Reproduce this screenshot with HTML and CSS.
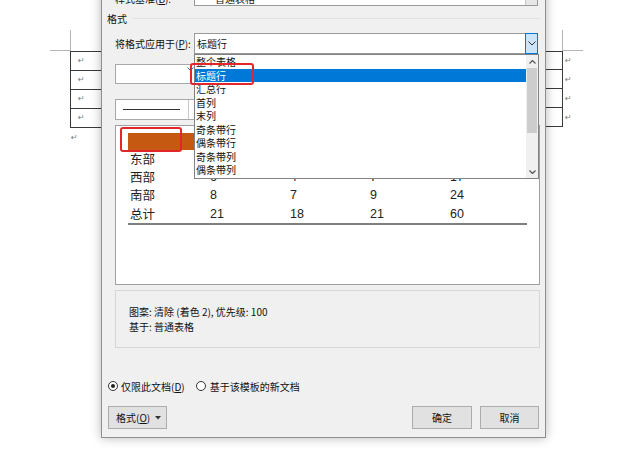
FILE: index.html
```html
<!DOCTYPE html>
<html lang="zh-CN">
<head>
<meta charset="utf-8">
<title>修改样式</title>
<link rel="stylesheet" href="styles.css">
</head>
<body>
<div class="page">
  <div class="crop crop-l-v"></div>
  <div class="crop crop-l-h"></div>
  <div class="crop crop-r-v"></div>
  <div class="crop crop-r-h"></div>

  <div class="doc doc-left">
    <div class="drow"><span class="pm">↵</span></div>
    <div class="drow"><span class="pm">↵</span></div>
    <div class="drow"><span class="pm">↵</span></div>
    <div class="drow"><span class="pm">↵</span></div>
    <div class="pm pm-after">↵</div>
  </div>

  <div class="doc doc-right">
    <div class="rrow"><div class="dcell"></div><span class="pm">↵</span></div>
    <div class="rrow"><div class="dcell"></div><span class="pm">↵</span></div>
    <div class="rrow"><div class="dcell"></div><span class="pm">↵</span></div>
    <div class="rrow"><div class="dcell"></div><span class="pm">↵</span></div>
  </div>

  <div class="dialog">
    <div class="row row-based">
      <label class="lbl">样式基准(<u>B</u>):</label>
      <div class="combo combo-top">
        <span class="combo-text text-indent">普通表格</span>
        <span class="combo-btn btn-gray"></span>
      </div>
    </div>

    <div class="group-head"><span>格式</span><i class="group-line"></i></div>

    <div class="row row-apply">
      <label class="lbl">将格式应用于(<u>P</u>):</label>
      <div class="combo combo-apply">
        <span class="combo-text">标题行</span>
        <span class="combo-btn btn-open">
          <svg width="8" height="5" viewBox="0 0 8 5"><polyline points="0.5,0.5 4,4 7.5,0.5" fill="none" stroke="#333" stroke-width="1"/></svg>
        </span>
      </div>
    </div>

    <div class="row row-font">
      <div class="field field-font">
        <svg class="blue-chev" width="7" height="5" viewBox="0 0 7 5"><polyline points="0.5,0.5 3.5,3.5 6.5,0.5" fill="none" stroke="#0078d7" stroke-width="1"/></svg>
        <i class="blue-bar"></i>
      </div>
    </div>

    <div class="row row-line">
      <div class="field field-line">
        <i class="sample-line"></i>
        <i class="divider"></i>
      </div>
    </div>

    <div class="preview">
      <div class="ptable">
        <div class="phead"></div>
        <div class="prow"><span class="pl">东部</span><span>7</span><span>7</span><span>5</span><span>19</span></div>
        <div class="prow"><span class="pl">西部</span><span>6</span><span>4</span><span>7</span><span>17</span></div>
        <div class="prow"><span class="pl">南部</span><span>8</span><span>7</span><span>9</span><span>24</span></div>
        <div class="prow"><span class="pl">总计</span><span>21</span><span>18</span><span>21</span><span>60</span></div>
      </div>
    </div>

    <div class="desc">
      <p>图案: 清除 (着色 2), 优先级: 100</p>
      <p>基于: 普通表格</p>
    </div>

    <div class="radios">
      <span class="radio on"></span><span class="rlabel">仅限此文档(<u>D</u>)</span>
      <span class="radio second"></span><span class="rlabel">基于该模板的新文档</span>
    </div>

    <div class="buttons">
      <button class="btn btn-fmt">格式(<u>O</u>)<svg width="6" height="4" viewBox="0 0 6 4"><polygon points="0,0 6,0 3,3.5" fill="#333"/></svg></button>
      <span class="spacer"></span>
      <button class="btn btn-ok">确定</button>
      <button class="btn btn-cancel">取消</button>
    </div>

    <div class="dropdown">
      <ul class="items">
        <li>整个表格</li>
        <li class="sel">标题行</li>
        <li>汇总行</li>
        <li>首列</li>
        <li>末列</li>
        <li>奇条带行</li>
        <li>偶条带行</li>
        <li>奇条带列</li>
        <li>偶条带列</li>
      </ul>
      <div class="scroll">
        <span class="arrow"><svg width="7" height="4" viewBox="0 0 7 4"><polyline points="0.5,3.5 3.5,0.5 6.5,3.5" fill="none" stroke="#555" stroke-width="1.2"/></svg></span>
        <span class="thumb"></span>
        <span class="track"></span>
        <span class="arrow"><svg width="7" height="4" viewBox="0 0 7 4"><polyline points="0.5,0.5 3.5,3.5 6.5,0.5" fill="none" stroke="#555" stroke-width="1.2"/></svg></span>
      </div>
    </div>
  </div>

  <div class="mark mark-1"></div>
  <div class="mark mark-2"></div>
</div>
</body>
</html>
```

FILE: styles.css
```css
* { box-sizing: border-box; }
body { margin: 0; }
.page {
  position: relative;
  width: 640px;
  height: 464px;
  overflow: hidden;
  background: #fff;
  font-family: "Noto Sans CJK SC", "Liberation Sans", sans-serif;
}

/* background document */
.crop { position: absolute; background: #b4b4b4; }
.crop-l-v { left: 70px; top: 30px; width: 1px; height: 21px; }
.crop-l-h { left: 50px; top: 50px; width: 20px; height: 1px; }
.crop-r-v { left: 562px; top: 30px; width: 1px; height: 21px; }
.crop-r-h { left: 562px; top: 50px; width: 21px; height: 1px; }

.doc { position: absolute; top: 51px; }
.doc-left { left: 70px; width: 60px; border-top: 1px solid #3a3a3a; }
.drow {
  height: 19px;
  border-left: 1px solid #3a3a3a;
  border-bottom: 1px solid #3a3a3a;
  display: flex;
  align-items: center;
  padding-left: 7px;
}
.pm { font-size: 8px; color: #7a7a7a; line-height: 1; font-family: "DejaVu Sans", sans-serif; }
.pm-after { margin: 6px 0 0 1px; }

.doc-right { left: 490px; }
.rrow { display: flex; align-items: center; height: 19px; }
.rrow:first-child .dcell { border-top: 1px solid #3a3a3a; height: 19px; }
.dcell { width: 73px; height: 19px; border-right: 1px solid #3a3a3a; border-bottom: 1px solid #3a3a3a; }
.rrow .pm { margin-left: 2px; }

/* dialog */
.dialog {
  position: absolute;
  left: 101px;
  top: -20px;
  width: 445px;
  height: 458px;
  border: 1px solid #8e8e8e;
  background: #f0f0f0;
  box-shadow: 0 0 10px rgba(0, 0, 0, 0.28);
  padding: 0 5px 0 6px;
  font-size: 10px;
  color: #111;
}
.row { display: flex; align-items: center; }
.lbl { width: 79px; margin-left: 7px; white-space: nowrap; }
.combo {
  width: 344px;
  height: 21px;
  border: 1px solid #9a9a9a;
  background: #fff;
  display: flex;
  align-items: stretch;
}
.combo-text { flex: 1; display: flex; align-items: center; padding-left: 2px; }
.text-indent { padding-left: 20px; }
.combo-btn { width: 12px; display: flex; align-items: center; justify-content: center; }
.btn-gray { background: #e6e6e6; border-left: 1px solid #c8c8c8; }
.btn-open { background: #cce4f7; border: 1px solid #0078d7; margin: -1px -1px -1px 0; width: 13px; }

.row-based { margin-top: 4px; height: 21px; }
.row-based .lbl, .row-based .combo-text { padding-top: 5px; }

.group-head { margin-top: 5px; height: 14px; display: flex; align-items: center; }
.group-head span { margin-left: -1px; }
.group-line { flex: 1; height: 1px; background: #e2e2e2; margin-left: 6px; }

.row-apply { margin-top: 8px; height: 21px; }

.row-font { margin-top: 10px; height: 20px; }
.field { margin-left: 7px; width: 130px; background: #fff; border: 1px solid #a8a8a8; display: flex; }
.field-font { height: 20px; align-items: flex-start; }
.blue-chev { margin: 2px 0 0 71px; }
.blue-bar { width: 1px; height: 8px; background: #0078d7; margin-left: 0; }

.row-line { margin-top: 15px; height: 21px; }
.field-line { height: 21px; align-items: center; }
.sample-line { width: 57px; height: 1px; background: #333; margin-left: 7px; }
.divider { width: 1px; height: 19px; background: #c8c8c8; margin-left: 8px; }

.preview {
  margin: 5px 0 0 7px;
  height: 160px;
  border: 1px solid #a0a0a0;
  background: #fff;
  padding: 7px 0 0 12px;
}
.ptable { width: 399px; border-bottom: 2px solid #7f7f7f; }
.phead { height: 17px; background: #c65911; }
.prow {
  height: 18.25px;
  display: grid;
  grid-template-columns: 82px 80px 80px 80px 1fr;
  align-items: center;
  font-family: "Liberation Sans", "Noto Sans CJK SC", sans-serif;
  font-size: 12.5px;
  color: #222;
  line-height: 1;
}
.pl { padding-left: 2px; font-family: "Noto Sans CJK SC", sans-serif; }

.desc {
  margin: 5px 0 0 7px;
  height: 58px;
  border: 1px solid #d6d6d6;
  padding: 13px 0 0 13px;
}
.desc p { margin: 0; line-height: 15px; }

.radios { margin-top: 31px; height: 14px; display: flex; align-items: center; }
.radio {
  width: 10px;
  height: 10px;
  border: 1px solid #333;
  border-radius: 50%;
  background: #fff;
  display: flex;
  align-items: center;
  justify-content: center;
}
.radio.on::after { content: ""; width: 4px; height: 4px; border-radius: 50%; background: #222; }
.radio.second { margin-left: 11px; }
.rlabel { margin-left: 3px; }
.radio.second + .rlabel { margin-left: 4px; }

.buttons { margin-top: 13px; height: 23px; display: flex; gap: 8px; }
.spacer { flex: 1; }
.btn {
  height: 23px;
  border: 1px solid #adadad;
  background: #e1e1e1;
  font: inherit;
  color: #111;
  padding: 0;
  display: flex;
  align-items: center;
  justify-content: center;
}
.btn-fmt { width: 59px; justify-content: flex-start; padding-left: 7px; }
.btn-fmt svg { margin-left: 5px; }
.btn-ok { width: 60px; }
.btn-cancel { width: 59px; margin-right: 1px; }

/* open drop-down list */
.dropdown {
  position: absolute;
  left: 92px;
  top: 73px;
  width: 345px;
  height: 125px;
  border: 1px solid #828282;
  background: #fff;
  display: flex;
}
.items { list-style: none; margin: 0; padding: 0; flex: 1; }
.items li { height: 13.5px; line-height: 13.5px; padding-left: 1px; color: #111; }
.items li.sel { background: #0078d7; color: #fff; }
.scroll { width: 12px; background: #f0f0f0; display: flex; flex-direction: column; }
.arrow { height: 13px; display: flex; align-items: center; justify-content: center; }
.thumb { height: 65px; background: #cdcdcd; margin: 0 1px 0 1px; }
.track { flex: 1; }

/* red annotation boxes */
.mark { position: absolute; border: 2px solid #e3262a; border-radius: 3px; }
.mark-1 { left: 190px; top: 63px; width: 64px; height: 22px; }
.mark-2 { left: 120px; top: 127px; width: 62px; height: 25px; }
```
